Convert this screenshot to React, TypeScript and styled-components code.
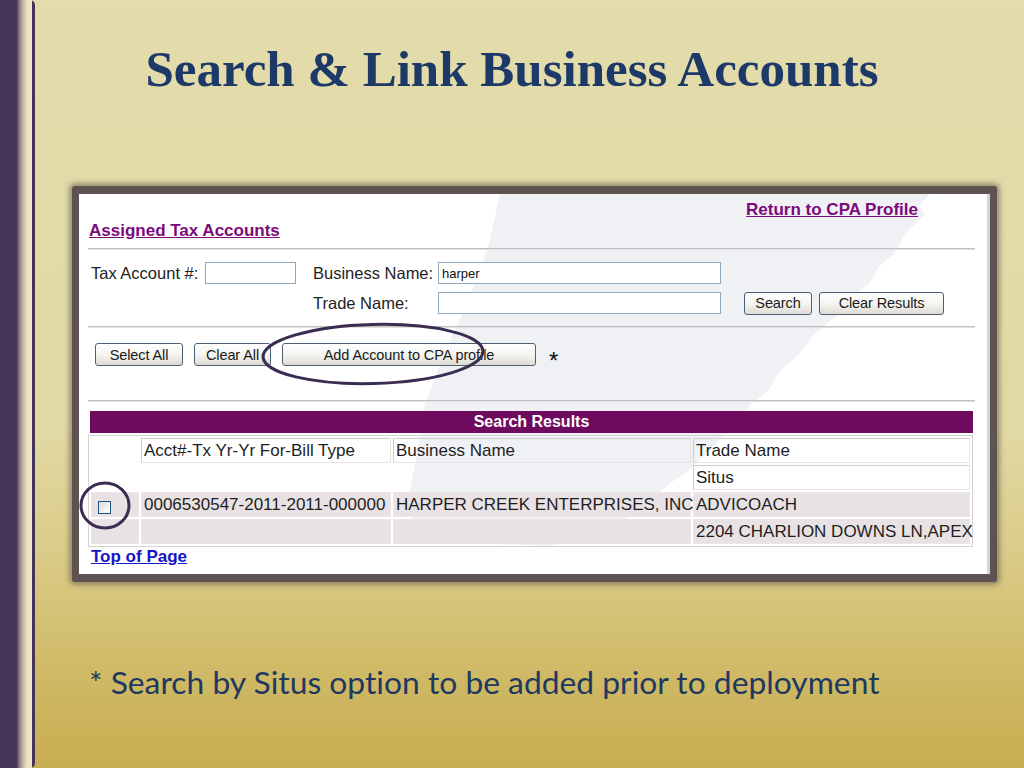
import styled, { createGlobalStyle } from "styled-components";

const GlobalStyle = createGlobalStyle`
  html, body {
    margin: 0;
    padding: 0;
  }
  body {
    width: 1024px;
    height: 768px;
    overflow: hidden;
    font-family: "Liberation Sans", Arial, sans-serif;
  }
`;

const Slide = styled.div`
  display: flex;
  width: 1024px;
  height: 768px;
  background: linear-gradient(
    180deg,
    #e3dcab 0%,
    #e1d9a4 56%,
    #dacb88 72%,
    #d0bb69 86%,
    #c8ad50 100%
  );
`;

const Sidebar = styled.div`
  flex: 0 0 35px;
  height: 768px;
  border-radius: 0 5px 5px 0;
  background: linear-gradient(
    90deg,
    #46355b 0,
    #46355b 17px,
    #6e6171 18px,
    #b6aa9b 22px,
    #e9e2bf 27px,
    #efe9c7 32px,
    #45345a 32px,
    #45345a 35px
  );
`;

const Main = styled.main`
  flex: 1;
  display: flex;
  flex-direction: column;
`;

const Title = styled.h1`
  margin: 44px 35px 0 0;
  font: bold 51px/51px "Liberation Serif", "Times New Roman", serif;
  color: #1c3967;
  text-align: center;
`;

const Panel = styled.section`
  position: relative;
  box-sizing: content-box;
  width: 911px;
  height: 380px;
  margin: 91px 0 0 37px;
  border: 7px solid #5d5452;
  border-top-width: 8px;
  border-bottom-width: 8px;
  border-radius: 3px;
  background: #fff;
  box-shadow: 0 0 5px 3px rgba(85, 75, 72, 0.5), inset -3px 0 0 #d4d4e8;
  overflow: hidden;
`;

const Watermark = styled.svg`
  position: absolute;
  left: 0;
  top: 0;
  width: 911px;
  height: 380px;
`;

const Page = styled.div`
  position: relative;
  padding: 6px 15px 0 9px;
  font-family: "Liberation Sans", Arial, sans-serif;
  color: #1e1e1e;
`;

const TopBar = styled.div`
  display: flex;
  justify-content: space-between;
  height: 41px;
  margin-bottom: 7px;
`;

const NavLink = styled.a<{ $color: string }>`
  font: bold 17px/20px "Liberation Sans", Arial, sans-serif;
  color: ${(p) => p.$color};
  text-decoration: underline;
  white-space: nowrap;
`;

const LeftLink = styled(NavLink)`
  align-self: flex-end;
  margin-left: 1px;
`;

const RightLink = styled(NavLink)`
  align-self: flex-start;
  margin-right: 57px;
`;

const Rule = styled.hr`
  height: 0;
  margin: 0;
  border: 0;
  border-top: 1px solid #c2bfbf;
  border-bottom: 1px solid #e2e0e0;
`;

const SearchGrid = styled.div`
  display: grid;
  grid-template-columns: 114px 108px 125px 306px auto;
  grid-auto-rows: 22px;
  row-gap: 8px;
  align-items: center;
  padding: 12px 0 12px 3px;
`;

const Label = styled.span`
  font-size: 16.5px;
  line-height: 22px;
  color: #222;
  white-space: nowrap;
`;

const TextBox = styled.input<{ $w: number }>`
  box-sizing: border-box;
  width: ${(p) => p.$w}px;
  height: 22px;
  padding: 0 3px;
  border: 1px solid #8fa6bd;
  background: #fff;
  font: 13px "Liberation Sans", Arial, sans-serif;
  color: #111;
  outline: none;
`;

const ButtonGroup = styled.div`
  display: flex;
  gap: 7px;
`;

const Button = styled.button<{ $w: number }>`
  box-sizing: border-box;
  width: ${(p) => p.$w}px;
  height: 23px;
  padding: 0;
  border: 1px solid #4d6073;
  border-radius: 3px;
  background: linear-gradient(180deg, #ffffff 0%, #f3f3ef 55%, #dddad2 100%);
  font: 14.5px "Liberation Sans", Arial, sans-serif;
  letter-spacing: -0.1px;
  color: #1a1a1a;
  white-space: nowrap;
`;

const ActionRow = styled.div`
  position: relative;
  display: flex;
  align-items: flex-start;
  gap: 11px;
  height: 23px;
  padding: 15px 0 34px 7px;
`;

const Asterisk = styled.span`
  margin: 7px 0 0 2px;
  font: 24px/22px "Liberation Sans", Arial, sans-serif;
  color: #111;
`;

const Ellipse = styled.svg`
  position: absolute;
  left: 172px;
  top: -7px;
  width: 226px;
  height: 66px;
  overflow: visible;
`;

const Results = styled.div`
  padding: 9px 0 0 2px;
`;

const ResultsBar = styled.div`
  height: 22px;
  margin-right: 2px;
  background: #6f0b5e;
  color: #fff;
  font: bold 16px/22px "Liberation Sans", Arial, sans-serif;
  text-align: center;
`;

const Table = styled.table`
  width: 885px;
  margin: 2px 0 0 -2px;
  table-layout: fixed;
  border-collapse: separate;
  border-spacing: 2px;
  border: 1px solid #d4d2d2;
  font: 17px/21px "Liberation Sans", Arial, sans-serif;
  color: #1e1e1e;
`;

const Cell = styled.td<{ $kind: "head" | "blank" | "data" }>`
  height: 21px;
  padding: 1px 2px;
  white-space: nowrap;
  overflow: visible;
  border: 1px solid transparent;
  ${(p) =>
    p.$kind === "head" &&
    `
    border-color: #cdcbcb #e6e4e4 #e6e4e4 #cdcbcb;
  `}
  ${(p) =>
    p.$kind === "data" &&
    `
    background: #e9e2e4;
    border-color: #ece6e8;
  `}
`;

const CheckWrap = styled.span`
  position: relative;
  display: inline-block;
  width: 13px;
  height: 13px;
  margin: 4px 0 0 4px;
  vertical-align: top;
`;

const CheckBox = styled.input`
  appearance: none;
  box-sizing: border-box;
  width: 13px;
  height: 13px;
  margin: 0;
  border: 1px solid #1f5385;
  background: linear-gradient(135deg, #dcdcd6, #ffffff);
`;

const Circle = styled.svg`
  position: absolute;
  left: 50%;
  top: 50%;
  width: 52px;
  height: 50px;
  transform: translate(-50%, -49%);
  overflow: visible;
`;

const BottomLink = styled(NavLink)`
  display: inline-block;
  margin: 0 0 0 1px;
`;

const Footnote = styled.p`
  margin: 80px 0 0 54px;
  font: 31.8px/40px Lato, "Open Sans", sans-serif;
  font-variant-ligatures: none;
  color: #1f3860;
  white-space: nowrap;
`;

const App = () => {
  return (
    <>
      <GlobalStyle />
      <Slide>
        <Sidebar />
        <Main>
          <Title>Search &amp; Link Business Accounts</Title>
          <Panel>
            <Watermark viewBox="0 0 911 380">
              <polygon
                fill="#f0f1f5"
                points="421,0 851,0 840,12 846,20 826,40 815,60 800,72 790,90 770,104 760,120 735,140 720,160 700,178 690,196 672,210 660,228 640,246 625,262 610,276 590,290 560,318 520,340 470,352 420,350 335,345 330,300 338,260 346,210 365,160 392,100 410,50"
              />
            </Watermark>
            <Page>
              <TopBar>
                <LeftLink href="#" $color="#7d0a7b">Assigned Tax Accounts</LeftLink>
                <RightLink href="#" $color="#7d0a7b">Return to CPA Profile</RightLink>
              </TopBar>
              <Rule />
              <SearchGrid>
                <Label>Tax Account #:</Label>
                <TextBox $w={91} readOnly value="" />
                <Label>Business Name:</Label>
                <TextBox $w={283} readOnly value="harper" />
                <span />
                <span />
                <span />
                <Label>Trade Name:</Label>
                <TextBox $w={283} readOnly value="" />
                <ButtonGroup>
                  <Button $w={68}>Search</Button>
                  <Button $w={125}>Clear Results</Button>
                </ButtonGroup>
              </SearchGrid>
              <Rule />
              <ActionRow>
                <Button $w={88}>Select All</Button>
                <Button $w={77}>Clear All</Button>
                <Button $w={254}>Add Account to CPA profile</Button>
                <Asterisk>*</Asterisk>
                <Ellipse viewBox="0 0 226 66">
                  <ellipse
                    cx="113"
                    cy="33"
                    rx="110"
                    ry="29.5"
                    fill="none"
                    stroke="#3b2d52"
                    strokeWidth="3"
                    transform="rotate(-1.5 113 33)"
                  />
                </Ellipse>
              </ActionRow>
              <Rule />
              <Results>
                <ResultsBar>Search Results</ResultsBar>
                <Table>
                  <colgroup>
                    <col style={{ width: 48 }} />
                    <col style={{ width: 250 }} />
                    <col style={{ width: 298 }} />
                    <col />
                  </colgroup>
                  <tbody>
                    <tr>
                      <Cell $kind="blank" />
                      <Cell $kind="head">Acct#-Tx Yr-Yr For-Bill Type</Cell>
                      <Cell $kind="head">Business Name</Cell>
                      <Cell $kind="head">Trade Name</Cell>
                    </tr>
                    <tr>
                      <Cell $kind="blank" />
                      <Cell $kind="blank" />
                      <Cell $kind="blank" />
                      <Cell $kind="head">Situs</Cell>
                    </tr>
                    <tr>
                      <Cell $kind="data">
                        <CheckWrap>
                          <CheckBox type="checkbox" />
                          <Circle viewBox="0 0 52 50">
                            <ellipse
                              cx="26"
                              cy="25"
                              rx="24"
                              ry="22.5"
                              fill="none"
                              stroke="#3b2d52"
                              strokeWidth="3"
                            />
                          </Circle>
                        </CheckWrap>
                      </Cell>
                      <Cell $kind="data">0006530547-2011-2011-000000</Cell>
                      <Cell $kind="data">HARPER CREEK ENTERPRISES, INC</Cell>
                      <Cell $kind="data">ADVICOACH</Cell>
                    </tr>
                    <tr>
                      <Cell $kind="data" />
                      <Cell $kind="data" />
                      <Cell $kind="data" />
                      <Cell $kind="data">2204 CHARLION DOWNS LN,APEX</Cell>
                    </tr>
                  </tbody>
                </Table>
                <BottomLink href="#" $color="#1414c8">Top of Page</BottomLink>
              </Results>
            </Page>
          </Panel>
          <Footnote>* Search by Situs option to be added prior to deployment</Footnote>
        </Main>
      </Slide>
    </>
  );
};

export default App;
